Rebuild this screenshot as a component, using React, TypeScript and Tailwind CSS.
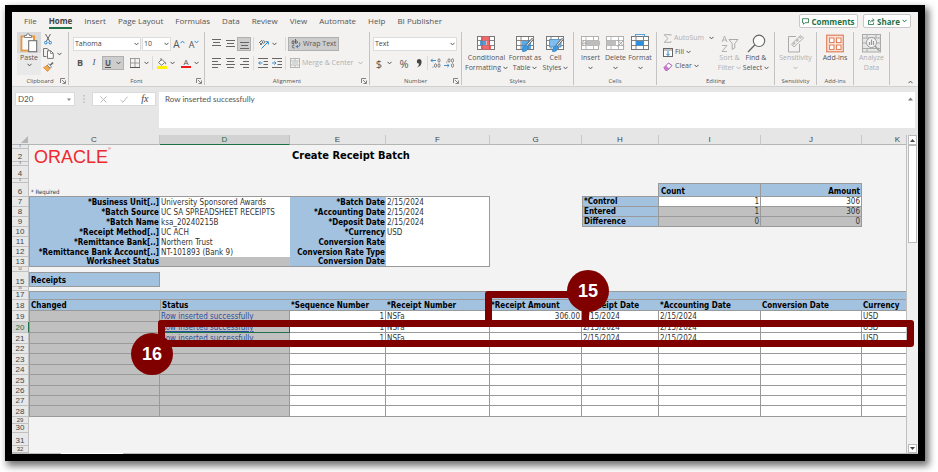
import type { ReactNode } from 'react';

const UI = "font-['Open_Sans','Noto_Sans',sans-serif]";
const SHEET = "font-['DejaVu_Sans_Condensed','DejaVu_Sans',sans-serif]";
const LINE = 'border-[#9a9a9a]';

/* ---------- icons ---------- */

function Svg({ w, h, vb, children }: { w: number; h: number; vb?: string; children: ReactNode }) {
  return (
    <svg width={w} height={h} viewBox={vb ?? `0 0 ${w} ${h}`} fill="none" aria-hidden="true" className="shrink-0">
      {children}
    </svg>
  );
}

const Chevron = ({ color = '#555' }: { color?: string }) => (
  <Svg w={5} h={4}><path d="M.5 .8 2.5 2.9 4.5 .8" stroke={color} /></Svg>
);

const Paste = () => (
  <Svg w={18} h={20}>
    <path d="M4.500 3.500H1.500V17.500H9" stroke="#e8973a" strokeWidth="2" />
    <path d="M11.500 3.500H14V7" stroke="#e8973a" strokeWidth="2" />
    <rect x="2.500" y="4.500" width="10.500" height="12" fill="#fafafa" />
    <path d="M4.500 4.500V2.500H6.500Q6.500 .7 8 .7T9.500 2.500H11.500V4.500Z" fill="#fafafa" stroke="#777" strokeWidth=".9" />
    <rect x="8.700" y="7.700" width="8" height="11" fill="#fff" stroke="#666" />
  </Svg>
);

const Cut = () => (
  <Svg w={8} h={11}>
    <path d="M1.500 0 5.800 7.500M6.500 0 2.200 7.500" stroke="#555" strokeWidth=".9" />
    <circle cx="1.800" cy="8.700" r="1.300" stroke="#2f86c9" />
    <circle cx="6.200" cy="8.700" r="1.300" stroke="#2f86c9" />
  </Svg>
);

const Copy = () => (
  <Svg w={11} h={11}>
    <path d="M3.500 8.500H.5V.5H4L6.500 2.500" stroke="#666" strokeWidth=".9" />
    <path d="M4.500 2.800H7.800L10.300 5.300V10.400H4.500Z" fill="#fff" stroke="#666" strokeWidth=".9" />
    <path d="M7.600 3V5.500H10" stroke="#666" strokeWidth=".7" />
  </Svg>
);

const Brush = () => (
  <Svg w={11} h={10}>
    <path d="M.5 5.500 4 3.500 7 6.500 4.500 9.500Z" fill="#f2a950" stroke="#e08a28" strokeWidth=".8" />
    <path d="M4.300 3.300 5.700 2 8.500 4.800 7.200 6.200Z" fill="#fff" stroke="#666" strokeWidth=".8" />
    <path d="M7.200 3.300 10 .6" stroke="#666" strokeWidth="1.500" />
  </Svg>
);

const Launcher = () => (
  <Svg w={6} h={6}><path d="M.5 5V.5H5M2 2 5 5M5.500 2.500V5.500H2.500" stroke="#666" strokeWidth=".8" /></Svg>
);

const Borders = () => (
  <Svg w={10} h={10}>
    <rect x=".5" y=".5" width="9" height="9" stroke="#888" strokeWidth=".8" />
    <path d="M5 .5V9.500M.5 5H9.500" stroke="#888" strokeWidth=".8" /><path d="M0 9.500H10" stroke="#555" />
  </Svg>
);

const FillColor = () => (
  <Svg w={10} h={11}>
    <path d="M1.500 4.500 4.800 1.300 7.800 4.300 4.600 7.200Z" fill="#fff" stroke="#666" strokeWidth=".9" />
    <path d="M4 0V3" stroke="#666" strokeWidth=".8" /><path d="M8.500 3.500Q9.700 5.500 8.800 6.500 7.700 6 8.500 3.500" fill="#2f86c9" />
    <rect y="8" width="10" height="3" fill="#fff200" />
  </Svg>
);

function AlignIcon({ lines, dy = 0 }: { lines: [number, number][]; dy?: number }) {
  return (
    <Svg w={9} h={10}>
      {lines.map(([x, w], i) => <path key={i} d={`M${x} ${dy + 0.5 + i * 3}H${x + w}`} stroke="#666" />)}
    </Svg>
  );
}

const Orientation = () => (
  <Svg w={11} h={10}>
    <path d="M1 4 4 1M2 6 5 3M1.500 3.500 4 6" stroke="#666" strokeWidth=".9" />
    <circle cx="5.500" cy="3" r="1.300" stroke="#666" strokeWidth=".8" />
    <path d="M3.500 9.500 10 3M7.500 2.700H10.300V5.500" stroke="#2f86c9" />
  </Svg>
);

const Indent = ({ out }: { out?: boolean }) => (
  <Svg w={10} h={10}>
    <path d="M0 .5H10M5.500 3.500H10M5.500 6.500H10M0 9.500H10" stroke="#666" />
    <path d={out ? 'M4.500 5H.8M2.300 3.300.7 5 2.300 6.700' : 'M0 5H4M2.400 3.300 4 5 2.400 6.700'} stroke="#2f86c9" strokeWidth=".9" />
  </Svg>
);

const Wrap = () => (
  <Svg w={10} h={10}>
    <path d="M1 3.500Q1 1 3 2V4.300Q.5 5.200 1 3.500M4.500 0V4.300Q7 4.500 6.500 2.500 5.800 1.300 4.500 2.500M3.500 6Q1.300 5.700 1.300 7.500T3.500 9" stroke="#555" strokeWidth=".9" />
    <path d="M8.500 3.500Q10 8 5.500 7.500M7 5.800 5.300 7.500 7 9.300" stroke="#2f6fb5" strokeWidth=".9" />
  </Svg>
);

const Merge = () => (
  <Svg w={10} h={10}>
    <rect x=".5" y=".5" width="9" height="9" stroke="#b5b5b5" />
    <path d="M.5 3H9.500M.5 7H9.500M5 .5V3M5 7V9.500M2 5H8" stroke="#b5b5b5" strokeWidth=".9" />
  </Svg>
);

const Decimals = ({ dec }: { dec?: boolean }) => (
  <Svg w={11} h={10}>
    {dec ? (
      <>
        <path d="M0 7.500H5M3.300 5.800 5 7.500 3.300 9.200" stroke="#2f86c9" strokeWidth=".9" />
        <ellipse cx="5" cy="2.500" rx="1" ry="1.800" stroke="#666" strokeWidth=".8" />
        <ellipse cx="8.500" cy="2.500" rx="1" ry="1.800" stroke="#666" strokeWidth=".8" />
        <ellipse cx="8.500" cy="7.500" rx="1" ry="1.800" stroke="#666" strokeWidth=".8" />
        <circle cx="2.700" cy="4" r=".5" fill="#555" />
      </>
    ) : (
      <>
        <path d="M6 2.500H1M2.700 .8 1 2.500 2.700 4.200" stroke="#2f86c9" strokeWidth=".9" />
        <ellipse cx="9" cy="2.500" rx="1" ry="1.800" stroke="#666" strokeWidth=".8" />
        <ellipse cx="5.500" cy="7.500" rx="1" ry="1.800" stroke="#666" strokeWidth=".8" />
        <ellipse cx="9" cy="7.500" rx="1" ry="1.800" stroke="#666" strokeWidth=".8" />
        <circle cx="3" cy="9" r=".5" fill="#555" />
      </>
    )}
  </Svg>
);

function GridBase({ color = '#777' }: { color?: string }) {
  return (
    <>
      <rect x=".5" y="2.500" width="17" height="13" fill="#fff" stroke={color} />
      <path d="M.5 6.500H17.500M.5 11.500H17.500M5 2.500V15.500M12.500 2.500V15.500" stroke={color} strokeWidth=".9" />
    </>
  );
}

const PenStroke = () => (
  <>
    <path d="M17 4.500 10.500 12" stroke="#666" strokeWidth="2.600" /><path d="M17 4.500 10.500 12" stroke="#fff" strokeWidth="1" />
    <path d="M10.500 11.500Q6.500 12 6.500 17.500 11.500 18 12 13Z" fill="#3e9be0" stroke="#2f7fbf" strokeWidth=".7" />
  </>
);

const CondIcon = () => (
  <Svg w={19} h={19}>
    <GridBase /><path d="M4 2.500H12V6.500H4ZM4 11.500H14V15.500H4Z" fill="#f4676b" /><path d="M9.500 7H12.500V11H9.500Z" fill="#f4676b" />
    <path d="M3 7H9V11H3Z" fill="#4f9fdd" /><path d="M5 2.500V15.500M12.500 2.500V15.500" stroke="#8a4a4c" strokeWidth=".5" />
  </Svg>
);
const TableIcon = () => (
  <Svg w={19} h={19}><GridBase /><path d="M5.500 7H15V15H5.500Z" fill="#5aa9e6" /><path d="M5 11.500H17M12.500 6V15" stroke="#4a86b5" strokeWidth=".8" /><PenStroke /></Svg>
);
const StylesIcon = () => (
  <Svg w={19} h={19}><GridBase /><path d="M3.500 5.500H15V13H3.500Z" fill="#7fbcf0" stroke="#4a86b5" strokeWidth=".8" /><PenStroke /></Svg>
);
const InsertIcon = () => (
  <Svg w={20} h={19}><GridBase color="#b0b0b0" /><path d="M4 7H19V11.500H4Z" fill="#bdbdbd" /><path d="M6 9.200H.5M3.200 6.500.5 9.200 3.200 12" stroke="#a5a5a5" /></Svg>
);
const DeleteIcon = () => (
  <Svg w={20} h={19}><GridBase color="#b0b0b0" /><path d="M.5 7H10V11.500H.5Z" fill="#bdbdbd" /><path d="M11.500 6 18 12.500M18 6 11.500 12.500" stroke="#a5a5a5" /></Svg>
);
const FormatIcon = () => (
  <Svg w={19} h={19}><GridBase /><path d="M5 7H12.500V11.500H5Z" fill="#2f8ee0" /><path d="M4.500 .5H13.500M4.500 0V2.500M13.500 0V2.500" stroke="#3e9be0" strokeWidth=".9" /></Svg>
);
const Sigma = () => <Svg w={9} h={9}><path d="M8 1.800V.7H1.200L5 4.500 1.200 8.300H8V7.200" stroke="#a5a5a5" strokeWidth=".9" /></Svg>;
const FillIcon = () => (
  <Svg w={10} h={9}><rect x=".5" y=".5" width="9" height="8" fill="#fff" stroke="#666" /><path d="M1 2H9" stroke="#666" strokeWidth=".8" /><path d="M5 3V7.500M3.300 5.800 5 7.500 6.700 5.800" stroke="#2f86c9" /></Svg>
);
const Eraser = () => (
  <Svg w={10} h={9}><path d="M1 5.500 5.500 1 9 3.500 4.500 8.300H2.500Z" fill="#fff" stroke="#a94fb5" /><path d="M1 5.500 3 3.500 6.200 6.500 4.500 8.300H2.500Z" fill="#c678cf" /></Svg>
);
const SortIcon = () => (
  <Svg w={18} h={18}>
    <path d="M1 7 3.500 1 6 7M2 5H5M1 10.500H6L1 16.500H6" stroke="#aaa" strokeWidth=".9" />
    <path d="M8 4.500H17L13.800 8.500V13L11.200 14.500V8.500Z" stroke="#aaa" />
  </Svg>
);
const FindIcon = () => (
  <Svg w={19} h={19}><circle cx="12" cy="6.800" r="5.700" fill="#fbfbfb" stroke="#666" strokeWidth="1.100" /><path d="M7.800 11 1 18" stroke="#666" strokeWidth="1.300" /></Svg>
);
const SensIcon = () => (
  <Svg w={18} h={19}>
    <path d="M9 2.500H1.500V18H12.500V10" stroke="#aaa" /><path d="M4.500 10 13.500 1.500M7 13 16.500 4M4.500 10 7 13M13.500 1.500 16.500 4" stroke="#aaa" strokeWidth=".9" />
    <path d="M6 10.500 14 3" stroke="#bbb" strokeWidth="2" strokeDasharray="3 1.500" />
  </Svg>
);
const AddinIcon = () => (
  <Svg w={18} h={19}>
    <rect x=".7" y="1.200" width="16.600" height="16.600" fill="#fbe3d9" stroke="#e0825c" strokeWidth="1.200" />
    <path d="M3.500 4H8V8.500H3.500ZM10.500 4H15V8.500H10.500ZM3.500 11H8V15.500H3.500ZM10.500 11H15V15.500H10.500Z" fill="#fff" stroke="#e0825c" strokeWidth="1.100" />
  </Svg>
);
const AnalyzeIcon = () => (
  <Svg w={19} h={19}>
    <rect x=".5" y=".5" width="18" height="17.500" fill="#e6e6e6" stroke="#aaa" />
    <path d="M.5 4H18.500M.5 14.500H18.500M5 .5V4M14 .5V4M5 14.500V18M.5 9H4M15 9H18.500" stroke="#aaa" />
    <circle cx="9.500" cy="8.500" r="5" fill="#f4f4f4" stroke="#999" /><path d="M7.500 11V8M9.500 11V5.500M11.500 11V7M13 12 17.500 17" stroke="#999" strokeWidth="1.200" />
  </Svg>
);

/* ---------- ribbon ---------- */

function Group({ label, width, launcher, children }: { label: string; width: string; launcher?: boolean; children: ReactNode }) {
  return (
    <section aria-label={label || 'Analysis'} className={`flex h-[53px] shrink-0 flex-col border-r border-[#c4c4c4] ${width}`}>
      <div className="flex-1">{children}</div>
      <div className={`grid h-[8px] items-center text-center text-[6px] leading-[8px] whitespace-nowrap text-[#555] ${launcher ? 'grid-cols-[8px_1fr_8px]' : 'grid-cols-1'}`}>
        {launcher && <span />}
        <span>{label}</span>
        {launcher && <button type="button" aria-label={`${label} settings`}><Launcher /></button>}
      </div>
    </section>
  );
}

function Big({ icon, lines, chevron, width, muted }: { icon: ReactNode; lines: string[]; chevron?: boolean; width: string; muted?: boolean }) {
  return (
    <button type="button" className={`flex shrink-0 flex-col items-center pt-[2px] leading-[10px] whitespace-nowrap ${width} ${muted ? 'text-[#b0b0b0]' : 'text-[#555]'}`}>
      <span className="flex h-[19px] items-center">{icon}</span>
      <span>{lines[0]}</span>
      <span className="flex h-[10px] items-center gap-[2px]">
        {lines[1]}
        {chevron && <Chevron color={muted ? '#b5b5b5' : '#555'} />}
      </span>
    </button>
  );
}

function Drop({ label, value, width }: { label: string; value: string; width: string }) {
  return (
    <span className={`relative flex h-[14px] items-center border border-[#dcdcdc] bg-white ${width}`}>
      <select aria-label={label} defaultValue={value} className="h-full w-full appearance-none bg-transparent pl-px text-[7px] leading-[12px] text-[#444]">
        <option>{value}</option>
      </select>
      <span className="pointer-events-none absolute right-px"><Chevron /></span>
    </span>
  );
}

const Tool = ({ label, on, width = 'w-[14px]', children }: { label: string; on?: boolean; width?: string; children: ReactNode }) => (
  <button type="button" aria-label={label} className={`flex h-[14px] shrink-0 items-center justify-center ${width} ${on ? 'border border-[#b0b0b0] bg-[#cdcdcd]' : ''}`}>
    {children}
  </button>
);

const Sep = () => <span className="block h-[14px] w-px shrink-0 bg-[#dadada]" />;

const TABS = ['File', 'Home', 'Insert', 'Page Layout', 'Formulas', 'Data', 'Review', 'View', 'Automate', 'Help', 'BI Publisher'];

function TabBar() {
  return (
    <nav className="flex h-[20px] items-start pr-[7px] pl-[12px] text-[8px] leading-[11px] text-[#555]">
      <div className="flex gap-[12px] pt-[3px]">
        {TABS.map((t) => (
          <a key={t} href="#" className={t === 'Home' ? 'border-b-2 border-[#1e7145] pb-px font-bold text-[#444]' : ''}>{t}</a>
        ))}
      </div>
      <div className="ml-auto flex gap-[5px] pt-[2px] font-bold text-[#1e7145]">
        <button type="button" className="flex h-[14px] w-[59px] items-center justify-center gap-[2px] rounded-[2px] border border-[#c8c8c8] bg-white">
          <Svg w={7} h={7}><path d="M.5 .7H6.500V4.700H3L1.500 6.300V4.700H.5Z" stroke="#1e7145" strokeWidth=".8" /></Svg>
          Comments
        </button>
        <button type="button" className="flex h-[14px] w-[48px] items-center gap-[2px] rounded-[2px] border border-[#c8c8c8] bg-white pl-[4px]">
          <Svg w={7} h={7}><path d="M2 2.500H.5V6.500H5.500V4.500M2.300 4.500Q2.500 2.300 5.500 2.200M4.300 .6 6.200 2.200 4.300 3.800" stroke="#1e7145" strokeWidth=".8" /></Svg>
          Share
          <span className="ml-auto pr-[3px]"><Chevron color="#1e7145" /></span>
        </button>
      </div>
    </nav>
  );
}

function Ribbon() {
  return (
    <div className="flex h-[55px] border-b border-[#d0d0d0] text-[7px] text-[#555]">
      <Group label="Clipboard" width="w-[57px]" launcher>
        <div className="flex gap-[2px] pl-[5px]">
          <button type="button" className="flex h-[43px] w-[24px] flex-col items-center bg-[#e9e9e9] leading-[10px]">
            <span className="flex h-[21px] w-full items-center justify-center bg-[#dadada]"><Paste /></span>
            Paste
            <Chevron />
          </button>
          <div className="flex flex-col gap-[3px] pt-[2px]">
            <button type="button" aria-label="Cut" className="pl-px"><Cut /></button>
            <button type="button" aria-label="Copy" className="flex items-center gap-[3px]"><Copy /><Chevron /></button>
            <button type="button" aria-label="Format painter"><Brush /></button>
          </div>
        </div>
      </Group>

      <Group label="Font" width="w-[136px]" launcher>
        <div className="flex flex-col gap-[5px] pt-[5px] pl-[4px]">
          <div className="flex items-center gap-[1px]">
            <Drop label="Font name" value="Tahoma" width="w-[68px]" />
            <Drop label="Font size" value="10" width="w-[29px]" />
            <Tool label="Grow font"><span className="text-[10px] leading-none">A</span><span className="-mt-[5px] rotate-180"><Chevron color="#2f86c9" /></span></Tool>
            <Tool label="Shrink font"><span className="text-[9px] leading-none">A</span><span className="-mt-[5px]"><Chevron color="#2f86c9" /></span></Tool>
          </div>
          <div className="flex items-center">
            <Tool label="Bold"><b className="text-[9px]">B</b></Tool>
            <Tool label="Italic"><i className="font-['Liberation_Serif',serif] text-[9px]">I</i></Tool>
            <Tool label="Underline" on width="ml-[1px] w-[22px]"><b className="mr-[5px] text-[8px] leading-[10px] underline">U</b><Chevron /></Tool>
            <Tool label="Borders" width="ml-[5px] w-[20px]"><Borders /><span className="ml-[4px]"><Chevron /></span></Tool>
            <span className="mr-[3px] ml-[3px]"><Sep /></span>
            <Tool label="Fill colour" width="w-[20px]"><FillColor /><span className="ml-[3px]"><Chevron /></span></Tool>
            <Tool label="Font colour" width="ml-[4px] w-[20px]">
              <span className="flex w-[10px] flex-col items-center border-b-2 border-[#f01818] text-[8px] leading-[8px]">A</span>
              <span className="ml-[3px]"><Chevron /></span>
            </Tool>
          </div>
        </div>
      </Group>

      <Group label="Alignment" width="w-[165px]" launcher>
        <div className="flex flex-col gap-[5px] pt-[5px] pl-[4px]">
          <div className="flex items-center">
            <Tool label="Top align"><AlignIcon lines={[[0, 9], [1, 7], [0, 9]]} /></Tool>
            <Tool label="Middle align"><AlignIcon lines={[[0, 9], [1, 7], [0, 9]]} dy={1} /></Tool>
            <Tool label="Bottom align" on><AlignIcon lines={[[0, 9], [1, 7], [0, 9]]} dy={3} /></Tool>
            <span className="mr-[3px] ml-[2px]"><Sep /></span>
            <Tool label="Orientation" width="w-[20px]"><Orientation /><span className="ml-[3px]"><Chevron /></span></Tool>
            <span className="mr-[2px] ml-[8px]"><Sep /></span>
            <button type="button" className="flex h-[14px] items-center gap-[2px] border border-[#b0b0b0] bg-[#cdcdcd] px-[2px] leading-[10px]"><Wrap />Wrap Text</button>
          </div>
          <div className="flex items-center">
            <Tool label="Align left"><AlignIcon lines={[[0, 9], [0, 6], [0, 9], [0, 6]]} /></Tool>
            <Tool label="Centre"><AlignIcon lines={[[0, 9], [1, 7], [0, 9], [1, 7]]} /></Tool>
            <Tool label="Align right"><AlignIcon lines={[[0, 9], [3, 6], [0, 9], [3, 6]]} /></Tool>
            <span className="mr-[2px] ml-[2px]"><Sep /></span>
            <Tool label="Decrease indent"><Indent out /></Tool>
            <Tool label="Increase indent"><Indent /></Tool>
            <span className="mr-[4px] ml-px"><Sep /></span>
            <button type="button" className="flex items-center gap-[2px] text-[#b0b0b0]"><Merge />Merge &amp; Center<span className="ml-[3px]"><Chevron color="#b5b5b5" /></span></button>
          </div>
        </div>
      </Group>

      <Group label="Number" width="w-[92px]" launcher>
        <div className="flex flex-col gap-[5px] pt-[5px] pl-[3px]">
          <Drop label="Number format" value="Text" width="w-[84px]" />
          <div className="flex items-center">
            <Tool label="Currency" width="w-[22px]"><span className="text-[11px] leading-none">$</span><span className="ml-[5px]"><Chevron /></span></Tool>
            <Tool label="Percent" width="ml-[2px] w-[14px]"><span className="text-[11px] leading-none">%</span></Tool>
            <Tool label="Comma" width="w-[16px]"><Svg w={6} h={9}><path d="M3 0A2.300 2.300 0 1 0 3.200 4.600Q3 7 1 8.500 5.600 7 5.600 3 5.500 0 3 0" fill="#444" /></Svg></Tool>
            <Sep />
            <Tool label="Increase decimal"><Decimals /></Tool>
            <Tool label="Decrease decimal"><Decimals dec /></Tool>
          </div>
        </div>
      </Group>

      <Group label="Styles" width="w-[112px]">
        <div className="flex pl-[3px]">
          <Big icon={<CondIcon />} lines={['Conditional', 'Formatting']} chevron width="w-[43px]" />
          <Big icon={<TableIcon />} lines={['Format as', 'Table']} chevron width="w-[34px]" />
          <Big icon={<StylesIcon />} lines={['Cell', 'Styles']} chevron width="w-[27px]" />
        </div>
      </Group>

      <Group label="Cells" width="w-[83px]">
        <div className="flex pl-[4px]">
          <Big icon={<InsertIcon />} lines={['Insert']} chevron width="w-[25px]" />
          <Big icon={<DeleteIcon />} lines={['Delete']} chevron width="w-[25px]" />
          <Big icon={<FormatIcon />} lines={['Format']} chevron width="w-[24px]" />
        </div>
      </Group>

      <Group label="Editing" width="w-[118px]">
        <div className="flex pl-[6px]">
          <div className="flex w-[52px] flex-col gap-[4px] pt-px leading-[10px]">
            <button type="button" className="flex items-center gap-[2px] text-[#b0b0b0]"><Sigma />AutoSum<span className="ml-[3px]"><Chevron /></span></button>
            <button type="button" className="flex items-center gap-[2px]"><FillIcon />Fill<Chevron /></button>
            <button type="button" className="flex items-center gap-[2px]"><Eraser />Clear<Chevron /></button>
          </div>
          <Big icon={<SortIcon />} lines={['Sort &', 'Filter']} chevron width="w-[29px]" muted />
          <Big icon={<FindIcon />} lines={['Find &', 'Select']} chevron width="w-[24px]" />
        </div>
      </Group>

      <Group label="Sensitivity" width="w-[42px]">
        <div className="flex justify-center"><Big icon={<SensIcon />} lines={['Sensitivity']} chevron width="w-[36px]" muted /></div>
      </Group>
      <Group label="Add-ins" width="w-[37px]">
        <div className="flex justify-center"><Big icon={<AddinIcon />} lines={['Add-ins']} width="w-[30px]" /></div>
      </Group>
      <Group label="" width="w-[36px]">
        <div className="flex justify-center"><Big icon={<AnalyzeIcon />} lines={['Analyze', 'Data']} width="w-[30px]" muted /></div>
      </Group>
      <button type="button" aria-label="Collapse ribbon" className="mr-[5px] mb-[2px] ml-auto rotate-180 self-end"><Chevron /></button>
    </div>
  );
}

/* ---------- formula bar ---------- */

function FormulaBar() {
  return (
    <div className="flex h-[48px] items-start bg-[#e6e6e6] pt-[5px] pr-[3px] pl-[3px] text-[8px] text-[#555]">
      <div className="flex h-[14px] w-[60px] items-center border border-[#dadada] bg-white pr-[3px]">
        <input aria-label="Name box" defaultValue="D20" className="w-full min-w-0 pl-[2px] font-['Lato','Open_Sans',sans-serif] outline-none" />
        <Svg w={4} h={3}><path d="M0 .5H4L2 3Z" fill="#888" /></Svg>
      </div>
      <span className="flex h-[14px] w-[17px] items-center justify-center"><Svg w={2} h={8}><path d="M1 0V1.500M1 3.200V4.700M1 6.500V8" stroke="#aaa" /></Svg></span>
      <div className="flex h-[14px] w-[64px] shrink-0 items-center justify-around border border-[#dadada] bg-white">
        <button type="button" aria-label="Cancel"><Svg w={7} h={7}><path d="M.5 .5 6.500 6.500M6.500 .5 .5 6.500" stroke="#bbb" /></Svg></button>
        <button type="button" aria-label="Enter"><Svg w={8} h={7}><path d="M.5 4 3 6.300 7.500 .7" stroke="#bbb" /></Svg></button>
        <button type="button" aria-label="Insert function" className="font-['Liberation_Serif',serif] text-[10px] leading-none text-[#444] italic">fx</button>
      </div>
      <div className="ml-[3px] flex h-[36px] flex-1 items-start bg-white pt-px pr-[2px]">
        <textarea aria-label="Formula" defaultValue="Row inserted successfully" className="h-full flex-1 resize-none overflow-hidden pl-[6px] font-['Lato','Open_Sans',sans-serif] leading-[13px] outline-none" />
        <button type="button" aria-label="Collapse formula bar" className="pt-[4px]"><Svg w={5} h={4}><path d="M0 3.500H5L2.500 .5Z" fill="#777" /></Svg></button>
      </div>
    </div>
  );
}

/* ---------- worksheet ---------- */

/* Collapsed rows carry a number small enough to stay inside their height. */
const TINY = 'text-[3px] leading-[3px]';
const SMALL = 'text-[6px] leading-[6px]';
const FULL = 'text-[8px] leading-[9px]';

function RowHead({ n, h, active, text = FULL }: { n: number; h: string; active?: boolean; text?: string }) {
  return (
    <th scope="row" className={`border-r border-b border-[#c0c0c0] p-0 font-['Liberation_Sans',sans-serif] font-normal ${active ? 'border-r-[#1e7145] bg-[#d5d5d5] text-[#1e7145]' : 'bg-[#e8e8e8] text-[#444]'}`}>
      <div className={`flex items-end justify-center ${text} ${h}`}><span>{n}</span></div>
    </th>
  );
}

const Blank = ({ n, h, text }: { n: number; h: string; text?: string }) => (
  <tr><RowHead n={n} h={h} text={text} /><td colSpan={9} className="p-0" /></tr>
);

const COLS = ['C', 'D', 'E', 'F', 'G', 'H', 'I', 'J', 'K'];

const FORM: { n: number; a: string; av: string; b: string; bv: string; t?: [string, string, string] }[] = [
  { n: 7, a: '*Business Unit[..]', av: 'University Sponsored Awards', b: '*Batch Date', bv: '2/15/2024', t: ['*Control', '1', '306'] },
  { n: 8, a: '*Batch Source', av: 'UC SA SPREADSHEET RECEIPTS', b: '*Accounting Date', bv: '2/15/2024', t: ['Entered', '1', '306'] },
  { n: 9, a: '*Batch Name', av: 'ksa_20240215B', b: '*Deposit Date', bv: '2/15/2024', t: ['Difference', '0', '0'] },
  { n: 10, a: '*Receipt Method[..]', av: 'UC ACH', b: '*Currency', bv: 'USD' },
  { n: 11, a: '*Remittance Bank[..]', av: 'Northern Trust', b: 'Conversion Rate', bv: '' },
  { n: 12, a: '*Remittance Bank Account[..]', av: 'NT-101893 (Bank 9)', b: 'Conversion Rate Type', bv: '' },
  { n: 13, a: 'Worksheet Status', av: '', b: 'Conversion Date', bv: '' },
];

const HEADS = ['Changed', 'Status', '*Sequence Number', '*Receipt Number', '*Receipt Amount', '*Receipt Date', '*Accounting Date', 'Conversion Date', 'Currency'];

const RECEIPTS: { n: number; h: string; cells?: string[] }[] = [
  { n: 19, h: 'h-[10px]', cells: ['Row inserted successfully', '1', 'NSFa', '306.00', '2/15/2024', '2/15/2024', '', 'USD'] },
  { n: 20, h: 'h-[10px]', cells: ['Row inserted successfully', '1', 'NSFa', '', '2/15/2024', '2/15/2024', '', 'USD'] },
  { n: 21, h: 'h-[10px]', cells: ['Row inserted successfully', '1', 'NSFa', '', '2/15/2024', '2/15/2024', '', 'USD'] },
  { n: 22, h: 'h-[9px]' },
  { n: 23, h: 'h-[10px]' },
  { n: 24, h: 'h-[9px]' },
  { n: 25, h: 'h-[10px]' },
  { n: 26, h: 'h-[9px]' },
  { n: 27, h: 'h-[9px]' },
  { n: 28, h: 'h-[10px]' },
];

const BLUE = 'bg-[#a3c2e0]';
const GREY = 'bg-[#c0c0c0]';

function SheetTable() {
  return (
    <table className={`w-full table-fixed border-separate border-spacing-0 bg-[#f3f3f3] text-left text-[8px] leading-[9px] whitespace-nowrap text-[#333] ${SHEET}`}>
      <colgroup>
        <col className="w-[17px]" /><col className="w-[131px]" /><col className="w-[130px]" /><col className="w-[96px]" /><col className="w-[104px]" />
        <col className="w-[92px]" /><col className="w-[77px]" /><col className="w-[102px]" /><col className="w-[101px]" /><col className="w-[44px]" />
      </colgroup>
      <thead>
        <tr className="h-[10px] text-center font-['Liberation_Sans',sans-serif] text-[#444]">
          <td className="border-b border-[#b5b5b5] bg-[#e6e6e6] p-0"><span className="flex justify-end"><Svg w={8} h={7}><path d="M7 0V7H0Z" fill="#b5b5b5" /></Svg></span></td>
          {COLS.map((c) => (
            <th key={c} scope="col" className={`border-r border-b p-0 font-normal ${c === 'D' ? 'border-r-[#c0c0c0] border-b-[#1e7145] bg-[#d2d2d2] text-[#1e7145]' : 'border-r-[#c8c8c8] border-b-[#b5b5b5] bg-[#e6e6e6]'} ${c === 'K' ? 'border-r-0 pr-[6px] text-right' : ''}`}>{c}</th>
          ))}
        </tr>
      </thead>
      <tbody>
        <Blank n={1} h="h-[3px]" text={TINY} />
        <tr>
          <RowHead n={2} h="h-[12px]" />
          <td className="p-0 pl-[5px]">
            <div className="flex h-[13px] items-start font-['Liberation_Sans',sans-serif] text-[18px] leading-[16px] text-[#ee2a2e]">ORACLE<sup className="text-[4px] leading-none">®</sup></div>
          </td>
          <td />
          <td colSpan={7} className="p-0 pl-[2px]"><h1 className="h-[13px] text-[11px] leading-[14px] font-bold text-black">Create Receipt Batch</h1></td>
        </tr>
        <Blank n={3} h="h-[3px]" text={TINY} />
        <Blank n={4} h="h-[12px]" />
        <Blank n={5} h="h-[3px]" text={TINY} />
        <tr>
          <RowHead n={6} h="h-[13px]" />
          <td className={`border-b ${LINE} p-0 pl-[2px] align-bottom text-[6px] leading-[8px]`}>* Required</td>
          <td colSpan={3} className={`border-b ${LINE} p-0`} />
          <td />
          <td className={`border-r border-b ${LINE} p-0`} />
          <th scope="col" className={`border-t border-r border-b ${LINE} ${BLUE} p-0 pl-[2px] align-bottom text-black`}>Count</th>
          <th scope="col" className={`border-t border-r border-b ${LINE} ${BLUE} p-0 pr-px text-right align-bottom text-black`}>Amount</th>
          <td />
        </tr>
        {FORM.map((r, i) => {
          const end = i === FORM.length - 1 ? `border-b ${LINE}` : '';
          return (
            <tr key={r.n}>
              <RowHead n={r.n} h="h-[9px]" />
              <th scope="row" className={`border-l ${LINE} ${BLUE} p-0 pr-px text-right text-black ${end}`}>{r.a}</th>
              <td className={`p-0 pl-px ${end} ${i === 6 ? GREY : 'bg-white'}`}>{r.av}</td>
              <th scope="row" className={`${BLUE} p-0 pr-px text-right text-black ${end}`}>{r.b}</th>
              <td className={`border-r ${LINE} bg-white p-0 pl-px ${end}`}>{r.bv}</td>
              <td />
              {r.t ? (
                <>
                  <th scope="row" className={`border-r border-b border-l ${LINE} ${BLUE} p-0 pl-px text-black`}>{r.t[0]}</th>
                  <td className={`border-r border-b ${LINE} p-0 pr-px text-right ${i ? GREY : 'bg-white'}`}>{r.t[1]}</td>
                  <td className={`border-r border-b ${LINE} p-0 pr-px text-right ${i ? GREY : 'bg-white'}`}>{r.t[2]}</td>
                </>
              ) : <td colSpan={3} />}
              <td />
            </tr>
          );
        })}
        <Blank n={14} h="h-[4px]" text={TINY} />
        <tr>
          <RowHead n={15} h="h-[14px]" />
          <th className={`border ${LINE} ${BLUE} p-0 pl-px align-bottom leading-[11px] text-black`}>Receipts</th>
          <td colSpan={8} />
        </tr>
        <Blank n={16} h="h-[3px]" text={TINY} />
        <tr>
          <RowHead n={17} h="h-[8px]" />
          <td colSpan={9} className={`border-t border-b border-l ${LINE} ${BLUE} p-0`} />
        </tr>
        <tr>
          <RowHead n={18} h="h-[10px]" />
          {HEADS.map((h, i) => (
            <th key={h} scope="col" className={`border-b ${LINE} ${BLUE} p-0 pl-px align-bottom text-black ${i < 2 ? 'border-l' : ''}`}>{h}</th>
          ))}
        </tr>
        {RECEIPTS.map((r) => (
          <tr key={r.n}>
            <RowHead n={r.n} h={r.h} active={r.n === 20} />
            <td className={`border-r border-b border-l ${LINE} ${GREY} p-0`} />
            <td className={`border-r border-b ${r.n === 20 ? 'border-[#1e7145]' : LINE} ${GREY} p-0 pl-px align-bottom`}>
              {r.cells && <a href="#" className="text-[#2a50a0] underline">{r.cells[0]}</a>}
            </td>
            {COLS.slice(2).map((c, i) => (
              <td key={c} className={`border-b ${LINE} bg-white p-0 align-bottom ${c === 'E' || c === 'G' ? 'pr-px text-right' : 'pl-px'} ${c === 'K' ? '' : 'border-r'}`}>
                {r.cells?.[i + 1]}
              </td>
            ))}
          </tr>
        ))}
        <Blank n={29} h="h-[6px]" text={SMALL} />
        <Blank n={30} h="h-[8px]" />
        <Blank n={31} h="h-[12px]" />
        <Blank n={32} h="h-[6px]" text={SMALL} />
      </tbody>
    </table>
  );
}

function ScrollBar() {
  return (
    <div className="flex w-[12px] shrink-0 flex-col items-center border-l border-[#c0c0c0] bg-[#f0f0f0]">
      <button type="button" aria-label="Scroll up" className="flex h-[10px] w-[9px] items-center justify-center border border-[#bbb] bg-white"><Svg w={5} h={3}><path d="M0 3H5L2.500 0Z" fill="#444" /></Svg></button>
      <div className="h-[98px] w-[9px] border border-[#bbb] bg-white" />
      <button type="button" aria-label="Scroll down" className="mt-auto flex h-[9px] w-[9px] items-center justify-center border border-[#bbb] bg-white"><Svg w={5} h={3}><path d="M0 0H5L2.500 3Z" fill="#444" /></Svg></button>
    </div>
  );
}

const BADGE = "absolute flex h-[42px] w-[42px] items-center justify-center rounded-full bg-[#800000] font-['Liberation_Sans',sans-serif] text-[18px] font-bold text-white";

export default function App() {
  return (
    <main className="bg-white pt-[5px] pr-[13px] pb-[13px] pl-[5px]">
      <div className={`border-[7px] border-black bg-[#f3f2f1] shadow-[3px_4px_7px_1px_rgba(0,0,0,0.55)] ${UI}`}>
        <TabBar />
        <Ribbon />
        <FormulaBar />
        <div className="relative flex">
          <div className="min-w-0 flex-1"><SheetTable /></div>
          <ScrollBar />
          <div className="pointer-events-none absolute top-[156px] left-[473px] h-[36px] w-[104px] rounded-[3px] border-[7px] border-[#800000]" />
          <div className="pointer-events-none absolute top-[185px] right-[4px] left-[146px] h-[27px] rounded-[3px] border-[7px] border-[#800000]" />
          <span className={`${BADGE} top-[135px] left-[555px]`}>15</span>
          <span className={`${BADGE} top-[198px] left-[119px]`}>16</span>
        </div>
        <div className="flex h-px bg-[#bbb]"><span className="ml-[49px] w-[62px] bg-white" /></div>
      </div>
    </main>
  );
}
